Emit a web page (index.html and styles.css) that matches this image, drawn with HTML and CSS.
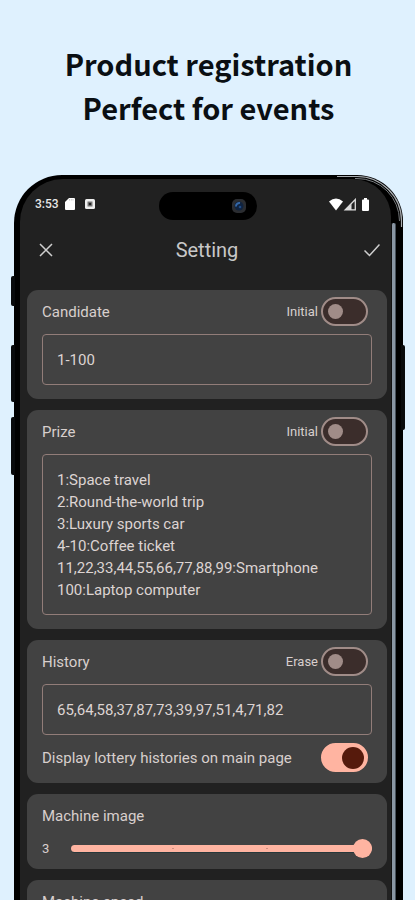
FILE: index.html
```html
<!DOCTYPE html>
<html lang="en">
<head>
<meta charset="utf-8">
<meta name="viewport" content="width=device-width, initial-scale=1">
<title>Product registration</title>
<link rel="stylesheet" href="styles.css">
</head>
<body>
<main class="stage">
  <h1 class="headline">Product registration<br>Perfect for events</h1>
  <div class="phone">
    <span class="side-key side-key--action"></span>
    <span class="side-key side-key--up"></span>
    <span class="side-key side-key--down"></span>
    <span class="side-key side-key--power"></span>
    <span class="edge-light"></span>
    <svg class="corner-light" viewBox="0 0 70 56" fill="none" aria-hidden="true">
      <path d="M4 1.500H24A44.500 44.500 0 0 1 68.500 46V52" stroke="#a9adb1" stroke-width="1.200"/>
      <path d="M22 3.500H24A42.500 42.500 0 0 1 66.500 46" stroke="#777b7e" stroke-width="1"/>
    </svg>
    <div class="screen">
      <div class="status">
        <div class="status__group">
          <span>3:53</span>
          <svg width="10" height="12" viewBox="0 0 10 12" aria-hidden="true"><path d="M4 0H9Q10 0 10 1V11Q10 12 9 12H1Q0 12 0 11V4Z" fill="#fff"/><path d="M4.500 1V2.500M6.300 1V2.500M8 1V2.500" stroke="#aaa" stroke-width=".6"/></svg>
          <svg class="status__app" width="10" height="10" viewBox="0 0 10 10" aria-hidden="true"><rect width="10" height="10" rx="1.500" fill="#eee"/><rect x="2.500" y="2.500" width="5" height="5" fill="#777"/><circle cx="5" cy="5" r="1.300" fill="#222"/></svg>
        </div>
        <div class="island">
          <svg width="16" height="16" viewBox="0 0 16 16" aria-hidden="true"><rect x="1" y="1" width="14" height="14" rx="5" fill="#2b2d31"/><circle cx="8" cy="8" r="4.500" fill="#10233f"/><path d="M5 8.500A3.500 3.500 0 0 1 9 5" stroke="#3568a8" stroke-width="2" fill="none"/><circle cx="9" cy="9" r="1.300" fill="#1d4a86"/></svg>
        </div>
        <div class="status__group status__group--end">
          <svg width="43" height="13" viewBox="0 0 43 13" aria-hidden="true"><path d="M0 3.500Q7 -2.500 14 3.500L7 12.500Z" fill="#fff"/><path d="M26.300 1.500V11.800H16.200Z" fill="none" stroke="#ddd" stroke-width="1.300"/><path d="M22.500 6V12H16Z" fill="#ddd"/><path d="M35 0H38V1.500H39Q40 1.500 40 2.500V12Q40 13 39 13H34Q33 13 33 12V2.500Q33 1.500 34 1.500H35Z" fill="#fff"/></svg>
        </div>
      </div>
      <header class="appbar">
        <button class="appbar__button" type="button" aria-label="Close"><svg width="14" height="14" viewBox="0 0 14 14" fill="none" stroke="#cfcfcf" stroke-width="1.500"><path d="M1 1L13 13M13 1L1 13"/></svg></button>
        <h2 class="appbar__title">Setting</h2>
        <button class="appbar__button appbar__button--end" type="button" aria-label="Save"><svg width="16" height="14" viewBox="0 0 16 14" fill="none" stroke="#cfcfcf" stroke-width="1.500"><path d="M.5 7.500L5.500 12.500L15.500 1.500"/></svg></button>
      </header>
      <form class="cards">
        <section class="card">
          <div class="row">
            <label class="label" for="candidate">Candidate</label>
            <label class="option">Initial <input class="switch" type="checkbox"></label>
          </div>
          <textarea class="box" id="candidate" rows="1">1-100</textarea>
        </section>
        <section class="card">
          <div class="row">
            <label class="label" for="prize">Prize</label>
            <label class="option">Initial <input class="switch" type="checkbox"></label>
          </div>
          <textarea class="box" id="prize" rows="6">1:Space travel
2:Round-the-world trip
3:Luxury sports car
4-10:Coffee ticket
11,22,33,44,55,66,77,88,99:Smartphone
100:Laptop computer</textarea>
        </section>
        <section class="card card--compact">
          <div class="row">
            <label class="label" for="history">History</label>
            <label class="option">Erase <input class="switch" type="checkbox"></label>
          </div>
          <textarea class="box" id="history" rows="1">65,64,58,37,87,73,39,97,51,4,71,82</textarea>
          <div class="row">
            <label class="label" for="show-history">Display lottery histories on main page</label>
            <input class="switch" id="show-history" type="checkbox" checked>
          </div>
        </section>
        <section class="card card--compact">
          <div class="row"><label class="label" for="machine-image">Machine image</label></div>
          <div class="slider-row">
            <output class="slider-value" for="machine-image">3</output>
            <input class="slider" id="machine-image" type="range" min="0" max="3" value="3">
          </div>
        </section>
        <section class="card card--compact">
          <div class="row"><label class="label" for="machine-speed">Machine speed</label></div>
          <div class="slider-row">
            <output class="slider-value" for="machine-speed">3</output>
            <input class="slider" id="machine-speed" type="range" min="0" max="3" value="3">
          </div>
        </section>
      </form>
    </div>
  </div>
</main>
</body>
</html>
```
FILE: styles.css
```css
* { box-sizing: border-box; }

body {
  margin: 0;
  background: #dff1fe;
  font-family: Roboto, "Liberation Sans", sans-serif;
}

.stage {
  height: 100vh;
  overflow: hidden;
  padding: 41px 12px 0 14px;
}

.headline {
  margin: 0 0 46px;
  color: #0a0f13;
  font: 700 29px/44px "Noto Sans CJK JP", "Noto Sans", sans-serif;
  text-align: center;
}

.phone {
  position: relative;
  padding: 4px 12px 0 6px;
  border-radius: 48px 46px 0 0;
  background: #000;
}

.screen {
  padding: 0 4px 0 7px;
  border-radius: 43px 38px 0 0;
  background: #212121;
}

.side-key {
  position: absolute;
  left: -3px;
  width: 4px;
  border-radius: 2px 0 0 2px;
  background: #080a0c;
}
.side-key--action { top: 101px; height: 30px; }
.side-key--up { top: 170px; height: 57px; }
.side-key--down { top: 242px; height: 58px; }
.side-key--power {
  top: 170px;
  left: auto;
  right: -2px;
  height: 85px;
  border-radius: 0 2px 2px 0;
}

.edge-light {
  position: absolute;
  top: 48px;
  right: 7px;
  bottom: 0;
  width: 5px;
  border-left: 1px solid #111;
  border-right: 1px solid #46505a;
  border-radius: 2px 2px 0 0;
  background: #8996a3;
}

.corner-light {
  position: absolute;
  top: 0;
  right: 0;
  width: 70px;
  height: 56px;
}

.status {
  display: grid;
  grid-template-columns: 1fr 98px 1fr;
  align-items: center;
  padding: 13px 0 0 8px;
  margin-right: 6px;
  color: #e8e8e8;
  font-size: 12px;
  font-weight: 500;
  line-height: 24px;
}

.status__group {
  display: flex;
  align-items: center;
  gap: 6px;
  padding-bottom: 4px;
}
.status__app { margin-left: 4px; }
.status__group--end {
  justify-content: flex-end;
  padding-right: 9px;
}

.island {
  display: flex;
  align-items: center;
  justify-content: flex-end;
  height: 28px;
  padding-right: 10px;
  border-radius: 14px;
  background: #000;
}

.appbar {
  display: grid;
  grid-template-columns: 40px 1fr 40px;
  align-items: center;
  padding: 10px 0 20px;
}

.appbar__title {
  margin: 0;
  color: #c8c8c8;
  font-size: 20px;
  font-weight: 400;
  line-height: 40px;
  text-align: center;
}

.appbar__button {
  display: flex;
  align-items: center;
  height: 40px;
  padding: 0 12px;
  border: 0;
  background: none;
}
.appbar__button--end {
  justify-content: flex-end;
  padding: 0 7px;
}

.cards {
  display: flex;
  flex-direction: column;
  gap: 11px;
}

.card {
  display: flex;
  flex-direction: column;
  gap: 8px;
  padding: 7px 15px 14px;
  border-radius: 11px;
  background: #424242;
}
.card--compact { padding-bottom: 11px; }

.row {
  display: flex;
  align-items: center;
  justify-content: space-between;
  height: 29px;
  padding-right: 4px;
}

.label {
  color: #d8cfcd;
  font-size: 15px;
}

.option {
  display: flex;
  align-items: center;
  gap: 3px;
  color: #d8cfcd;
  font-size: 13px;
}

.switch {
  appearance: none;
  display: flex;
  align-items: center;
  width: 47px;
  height: 29px;
  margin: 0;
  padding: 0 5px;
  border: 2px solid #a08c88;
  border-radius: 15px;
  background: #3b2d2b;
}
.switch::before {
  content: "";
  width: 15px;
  height: 15px;
  border-radius: 50%;
  background: #a08c88;
}
.switch:checked {
  justify-content: flex-end;
  padding: 0 2px;
  border-color: #ffb4a1;
  background: #ffb4a1;
}
.switch:checked::before {
  width: 22px;
  height: 22px;
  background: #561a0c;
}

.box {
  display: block;
  width: 100%;
  padding: 14px 14px 13px;
  border: 1px solid #927d79;
  border-radius: 4px;
  background: transparent;
  color: #ddd4d2;
  font: 400 15px/22px Roboto, "Liberation Sans", sans-serif;
  resize: none;
  overflow: hidden;
}

.slider-row {
  display: flex;
  align-items: center;
  height: 20px;
}

.slider-value {
  width: 29px;
  color: #d8cfcd;
  font-size: 13px;
}

.slider {
  appearance: none;
  flex: 1;
  min-width: 0;
  height: 20px;
  margin: 0;
  background: transparent;
}
.slider::-webkit-slider-runnable-track {
  height: 7px;
  border-radius: 4px;
  background:
    radial-gradient(circle, #d08f80 1px, transparent 1px) 34% 50% / 3px 3px no-repeat,
    radial-gradient(circle, #d08f80 1px, transparent 1px) 65% 50% / 3px 3px no-repeat,
    #ffb4a1;
  box-shadow: 0 1px 0 #27383b;
}
.slider::-webkit-slider-thumb {
  appearance: none;
  width: 19px;
  height: 19px;
  margin-top: -6px;
  border-radius: 50%;
  background: #ffb4a1;
}
```
